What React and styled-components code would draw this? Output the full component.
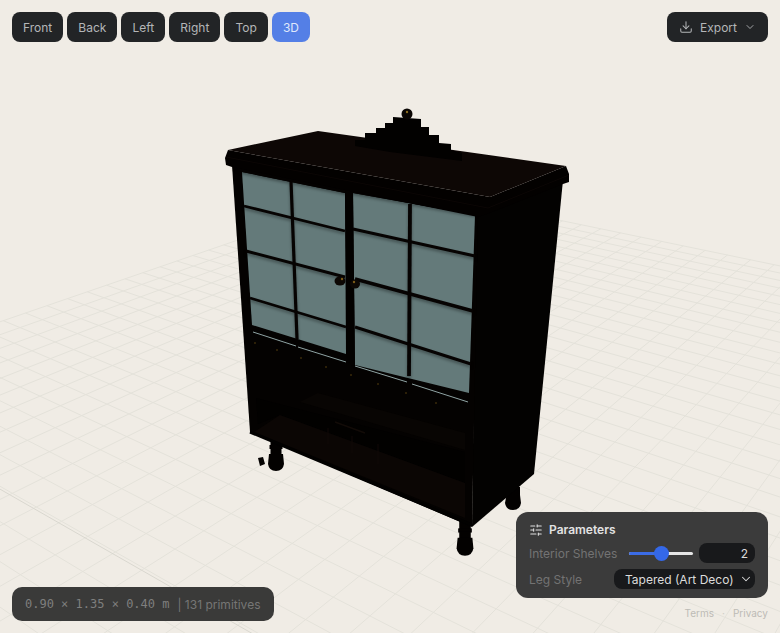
import React from "react";
import styled, { createGlobalStyle } from "styled-components";
import { ChevronDown, Download, SlidersHorizontal } from "lucide-react";

const VIEWS = ["Front", "Back", "Left", "Right", "Top", "3D"];

// floor grid: homography built from the two vanishing points of the cabinet
const VA = [1172, -81];
const VB = [-1054, -114];
const ORIGIN = [465, 553];
const project = (s, t) => {
  const w = 1 + s + t;
  return [
    (s * VA[0] + t * VB[0] + ORIGIN[0]) / w,
    (s * VA[1] + t * VB[1] + ORIGIN[1]) / w,
  ];
};
const FAR_S = 0.823;
const FAR_T = 0.49;
const AXIS_S = -0.163;
const NEAR = -0.3;
const STEP_S = 0.0298;
const STEP_T = 0.024;

const segment = (a, b) => `M${a[0].toFixed(1)} ${a[1].toFixed(1)}L${b[0].toFixed(1)} ${b[1].toFixed(1)}`;

const buildGrid = () => {
  const lines = [];
  for (let s = FAR_S; s > NEAR; s -= STEP_S) lines.push(segment(project(s, FAR_T), project(s, NEAR)));
  for (let t = FAR_T; t > NEAR; t -= STEP_T) lines.push(segment(project(FAR_S, t), project(NEAR, t)));
  return lines.join("");
};

const GLASS = [
  "242,172 345,193 346,354 252,325",
  "353,193 475,215 469,393 355,365",
];

const MULLIONS = [
  [291, 181, 297, 339, 3.2],
  [410, 204, 409, 376, 3.8],
  [244, 206, 345, 231, 2.8],
  [246, 251, 345, 277, 3],
  [250, 298, 346, 327, 2.8],
  [353, 229, 475, 256, 3.2],
  [355, 279, 473, 311, 3.4],
  [355, 327, 471, 364, 3.2],
];

const SILLS = [
  [253, 332, 296, 346],
  [298, 347, 346, 362],
  [355, 366, 407, 382],
  [412, 384, 468, 402],
];

const STUDS = [
  [255, 343], [277, 350], [301, 358], [326, 367],
  [351, 375], [378, 384], [406, 393], [436, 403],
];

const Leg = ({ x, y, scale = 1 }) => (
  <g transform={`translate(${x} ${y}) scale(${scale})`} fill="#030100">
    <rect x="-5.5" y="0" width="11" height="8" />
    <rect x="-6.5" y="7" width="13" height="4" />
    <rect x="-5.5" y="10" width="11" height="7" />
    <path d="M-7 16H7L8 26Q7 33 0 33Q-7 33 -8 26Z" />
  </g>
);

const Cabinet = () => (
  <g>
    <Leg x={276} y={438} />
    <Leg x={465} y={521} scale={1.05} />
    <path d="M508 487H520V495L521 503Q520 510 513 510Q506 510 505 503Z" fill="#030100" />
    <polygon points="258,458 263,457 265,464 260,466" fill="#050302" />

    {/* side and front */}
    <polygon points="476,205 563,180 534,474 472,527" fill="#030201" />
    <polygon points="232,165 478,212 472,527 250,432" fill="#040201" />

    {/* open lower section */}
    <polygon points="318,393 465,433 465,450 300,402" fill="#080503" />
    <polygon points="256,398 465,452 465,483 280,415 258,424" fill="#020100" />
    <polygon points="262,427 280,415 465,483 465,518 254,432" fill="#0b0604" />
    <path d="M335 422L365 433" stroke="#120b07" strokeWidth="1.5" />
    <path d="M328 428V444M352 436V453M378 444V464" stroke="#100906" strokeWidth="1" />
    <path d="M250 432L472 525" stroke="#020100" strokeWidth="3" />

    {/* doors */}
    {GLASS.map((points) => (
      <polygon key={points} points={points} fill="#647a7a" />
    ))}
    <g stroke="#060302" style={{ filter: "drop-shadow(0 2px 1.5px rgba(0,0,0,.35))" }}>
      {MULLIONS.map(([x1, y1, x2, y2, w]) => (
        <line key={`${x1}-${y1}`} x1={x1} y1={y1} x2={x2} y2={y2} strokeWidth={w} />
      ))}
      <polygon points="242,172 345,193 353,193 475,215 478,212 232,165" fill="#040201" strokeWidth="0" />
    </g>
    <polygon points="345,190 353,190 355,370 347,360" fill="#030100" />
    {SILLS.map(([x1, y1, x2, y2]) => (
      <line key={x1} x1={x1} y1={y1} x2={x2} y2={y2} stroke="#8fa3a3" strokeWidth="1" />
    ))}
    {STUDS.map(([cx, cy]) => (
      <circle key={cx} cx={cx} cy={cy} r="0.8" fill="#5f4610" />
    ))}

    {/* handles */}
    <ellipse cx="340" cy="281" rx="5.5" ry="4.5" fill="#0c0704" />
    <ellipse cx="355" cy="284" rx="5" ry="4.5" fill="#0c0704" />
    <circle cx="342" cy="279" r="1.2" fill="#7a5a18" />
    <circle cx="354" cy="282" r="1.2" fill="#7a5a18" />

    {/* top and cornice */}
    <polygon points="228,150 225,158 226,165 232,167 478,217 487,214 563,184 569,182 569,174 566,166 490,197" fill="#030100" />
    <path d="M226 157L488 208L569 175" fill="none" stroke="#0b0604" strokeWidth="1" />
    <polygon points="228,150 318,131 566,166 490,197" fill="#0d0705" />

    {/* crest */}
    <polygon
      points="355,140 365,140 365,133 376,133 376,128 385,128 385,123 393,123 393,117 421,119 421,127 429,127 429,135 439,135 439,143 451,144 451,150 462,153 462,161 390,152 355,146"
      fill="#020100"
    />
    <circle cx="407" cy="114" r="5.5" fill="#0a0603" />
    <circle cx="407" cy="112" r="1.2" fill="#8a6a1c" />
  </g>
);

const App = () => (
  <>
    <GlobalStyle />
    <Viewport>
      <Scene viewBox="0 0 780 633">
        <path d={buildGrid()} fill="none" stroke="#e4e2da" strokeWidth="1" />
        <path d={segment(project(AXIS_S, FAR_T), project(AXIS_S, NEAR))} fill="none" stroke="#d9d7cf" strokeWidth="1" />
        <Cabinet />
      </Scene>

      <TopBar>
        <ViewGroup>
          {VIEWS.map((view) => (
            <ViewButton key={view} $active={view === "3D"}>
              {view}
            </ViewButton>
          ))}
        </ViewGroup>
        <ExportButton>
          <Download size={14} strokeWidth={1.75} />
          <span>Export</span>
          <ChevronDown size={12} strokeWidth={1.75} />
        </ExportButton>
      </TopBar>

      <BottomBar>
        <StatusPill>
          <Dimensions>0.90 × 1.35 × 0.40 m</Dimensions>
          <Primitives>| 131 primitives</Primitives>
        </StatusPill>
        <RightColumn>
          <Panel>
            <PanelTitle>
              <SlidersHorizontal size={14} strokeWidth={1.75} />
              Parameters
            </PanelTitle>
            <Row>
              <Label>Interior Shelves</Label>
              <Slider>
                <SliderFill />
                <SliderThumb />
              </Slider>
              <NumberBox>2</NumberBox>
            </Row>
            <Row>
              <Label>Leg Style</Label>
              <SelectBox>
                Tapered (Art Deco)
                <ChevronDown size={14} strokeWidth={1.75} />
              </SelectBox>
            </Row>
          </Panel>
          <FooterLinks>
            <span>Terms</span>
            <Dot>·</Dot>
            <span>Privacy</span>
          </FooterLinks>
        </RightColumn>
      </BottomBar>
    </Viewport>
  </>
);

export default App;

const GlobalStyle = createGlobalStyle`
  html, body {
    margin: 0;
    padding: 0;
    background: #f0ece5;
    font-family: Inter, "Liberation Sans", sans-serif;
  }
`;

const Viewport = styled.div`
  position: relative;
  width: 780px;
  height: 633px;
  overflow: hidden;
  background: #f0ece5;
`;

const Scene = styled.svg`
  position: absolute;
  inset: 0;
  width: 780px;
  height: 633px;
  display: block;
`;

const TopBar = styled.div`
  position: absolute;
  top: 12px;
  left: 12px;
  right: 12px;
  display: flex;
  justify-content: space-between;
`;

const ViewGroup = styled.div`
  display: flex;
  gap: 4.1px;
`;

const ViewButton = styled.div`
  height: 30px;
  padding: 0 11px;
  display: flex;
  align-items: center;
  border-radius: 8px;
  font-size: 12px;
  color: ${(p) => (p.$active ? "#dfe7fb" : "#b4b6b8")};
  background: ${(p) => (p.$active ? "#547fe6" : "#222426")};
`;

const ExportButton = styled.div`
  width: 101px;
  height: 30px;
  box-sizing: border-box;
  display: flex;
  align-items: center;
  justify-content: center;
  gap: 7px;
  border-radius: 8px;
  font-size: 12px;
  color: #b4b6b8;
  background: #222426;
`;

const BottomBar = styled.div`
  position: absolute;
  left: 12px;
  right: 12px;
  bottom: 12px;
  display: flex;
  justify-content: space-between;
  align-items: flex-end;
`;

const StatusPill = styled.div`
  width: 262px;
  height: 34px;
  box-sizing: border-box;
  padding-left: 13px;
  display: flex;
  align-items: center;
  gap: 8px;
  border-radius: 10px;
  background: #3a3a39;
  font-size: 12px;
  white-space: nowrap;
`;

const Dimensions = styled.span`
  font-family: "DejaVu Sans Mono", "Liberation Mono", monospace;
  color: #7f7f7e;
`;

const Primitives = styled.span`
  color: #767675;
`;

const RightColumn = styled.div`
  display: flex;
  flex-direction: column;
  align-items: flex-end;
  gap: 9px;
`;

const Panel = styled.div`
  width: 252px;
  height: 86px;
  box-sizing: border-box;
  padding: 10px 13px 0;
  display: flex;
  flex-direction: column;
  gap: 6px;
  border-radius: 12px;
  background: #3b3b3b;
`;

const PanelTitle = styled.div`
  height: 15px;
  display: flex;
  align-items: center;
  gap: 6px;
  font-size: 12px;
  font-weight: 600;
  color: #e2e2e2;
`;

const Row = styled.div`
  height: 20px;
  display: flex;
  align-items: center;
  justify-content: space-between;
`;

const Label = styled.span`
  font-size: 12px;
  color: #737373;
  white-space: nowrap;
`;

const Slider = styled.div`
  position: relative;
  width: 64px;
  height: 3px;
  margin-left: 12px;
  border-radius: 2px;
  background: #e6e6e6;
`;

const SliderFill = styled.div`
  width: 50%;
  height: 100%;
  border-radius: 2px;
  background: #3b6ce6;
`;

const SliderThumb = styled.div`
  position: absolute;
  left: 25px;
  top: -6px;
  width: 15px;
  height: 15px;
  border-radius: 50%;
  background: #3468e8;
`;

const NumberBox = styled.div`
  width: 56px;
  height: 20px;
  box-sizing: border-box;
  margin-left: 6px;
  padding-right: 7px;
  display: flex;
  align-items: center;
  justify-content: flex-end;
  border-radius: 8px;
  font-size: 12px;
  color: #dcdcdc;
  background: #18191b;
`;

const SelectBox = styled.div`
  width: 141px;
  height: 20px;
  box-sizing: border-box;
  padding: 0 2px 0 11px;
  display: flex;
  align-items: center;
  justify-content: space-between;
  border-radius: 8px;
  font-size: 12px;
  color: #dcdcdc;
  background: #18191b;
`;

const FooterLinks = styled.div`
  display: flex;
  gap: 8px;
  padding-bottom: 2px;
  font-size: 10px;
  color: #bdbbb5;
`;

const Dot = styled.span`
  color: #cfcdc6;
`;
